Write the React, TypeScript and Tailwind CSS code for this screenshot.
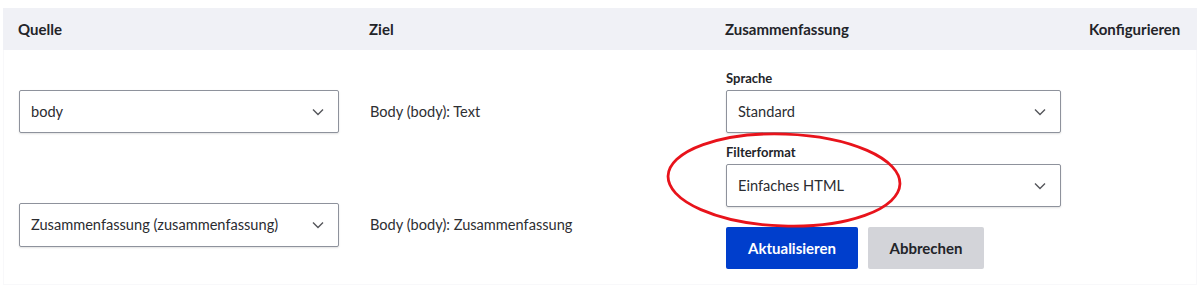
import React from "react";

const Chevron = () => (
  <svg width="12" height="8" viewBox="0 0 12 8" fill="none" className="shrink-0">
    <path d="M1 1.5L6 6.5L11 1.5" stroke="#55565b" strokeWidth="1.4" />
  </svg>
);

function Select({ value, className }: { value: string; className: string }) {
  return (
    <div
      className={`flex items-center justify-between rounded-[2px] border border-[#8e929c] bg-white pl-[11px] pr-[14px] text-[14.6px] text-[#2b2c31] shadow-[0_1px_2px_rgba(0,0,0,0.12)] ${className}`}
    >
      <span>{value}</span>
      <Chevron />
    </div>
  );
}

export default function App() {
  return (
    <div className="relative h-[285px] w-[1200px] overflow-hidden bg-white pt-[8px] font-['Lato','Open_Sans',sans-serif] text-[#232429]">
      <div className="ml-[3px] mr-[3px] flex h-[42px] items-center bg-[#f0f1f6] text-[15px] font-bold text-[#232429]">
        <div className="w-[366px] pl-[15px]">Quelle</div>
        <div className="w-[356px]">Ziel</div>
        <div className="w-[364px]">Zusammenfassung</div>
        <div className="flex-1">Konfigurieren</div>
      </div>
      <div className="ml-[3px] mr-[3px] flex h-[235px] border-x border-b border-[#f8f8fa]">
        <div className="flex w-[366px] flex-col pl-[15px] pt-[40px]">
          <Select value="body" className="h-[43px] w-[320px]" />
          <Select value="Zusammenfassung (zusammenfassung)" className="mt-[70px] h-[44px] w-[320px]" />
        </div>
        <div className="flex w-[356px] flex-col text-[14.6px] text-[#2e2f33]">
          <div className="mt-[40px] flex h-[43px] items-center">Body (body): Text</div>
          <div className="mt-[70px] flex h-[44px] items-center">Body (body): Zusammenfassung</div>
        </div>
        <div className="flex w-[364px] flex-col pt-[20px]">
          <div className="text-[13px] font-bold leading-[16px] text-[#232429]">Sprache</div>
          <Select value="Standard" className="mt-[4px] h-[43px] w-[335px]" />
          <div className="mt-[11px] text-[13px] font-bold leading-[16px] text-[#232429]">Filterformat</div>
          <Select value="Einfaches HTML" className="mt-[4px] h-[43px] w-[335px]" />
          <div className="mt-[20px] flex gap-[10px]">
            <button className="h-[42px] w-[132px] rounded-[2px] bg-[#003ecc] text-[15px] font-bold text-white">
              Aktualisieren
            </button>
            <button className="h-[42px] w-[116px] rounded-[2px] bg-[#d3d4d9] text-[15px] font-bold text-[#232429]">
              Abbrechen
            </button>
          </div>
        </div>
        <div className="flex-1" />
      </div>
      <svg
        className="pointer-events-none absolute left-[660px] top-[126px]"
        width="250"
        height="110"
        viewBox="0 0 250 110"
      >
        <ellipse
          cx="124"
          cy="54"
          rx="116"
          ry="46"
          fill="none"
          stroke="#e8131b"
          strokeWidth="2.8"
          transform="rotate(2 124 54)"
        />
      </svg>
    </div>
  );
}
